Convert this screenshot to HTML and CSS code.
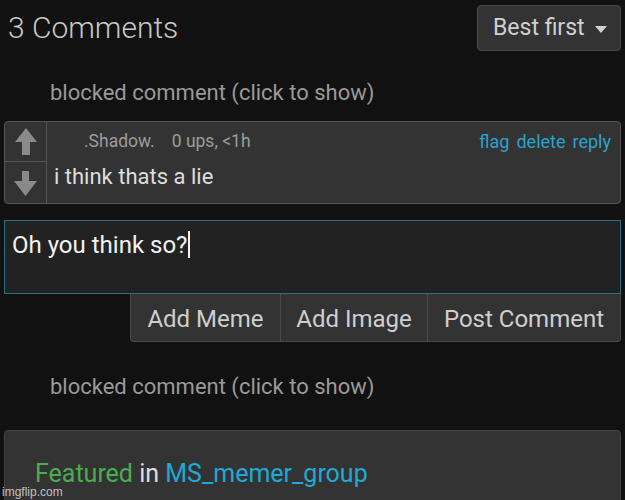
FILE: index.html
```html
<!DOCTYPE html>
<html>
<head>
<meta charset="utf-8">
<link rel="stylesheet" href="styles.css">
</head>
<body>
<div class="page">
  <div class="header">
    <h2 class="title">3 Comments</h2>
    <div class="sort">Best first <span class="caret"></span></div>
  </div>
  <div class="blocked first">blocked comment (click to show)</div>
  <div class="comment">
    <div class="votes">
      <div class="vote up">
        <svg width="22" height="27" viewBox="0 0 22 27"><polygon points="11,0 22,14 15,14 15,27 7,27 7,14 0,14" fill="#8a8a8a"/></svg>
      </div>
      <div class="vote down">
        <svg width="23" height="25" viewBox="0 0 23 25"><polygon points="8,0 15,0 15,10 23,10 11.5,25 0,10 8,10" fill="#8a8a8a"/></svg>
      </div>
    </div>
    <div class="cbody">
      <div class="meta">
        <span class="user">.Shadow.</span>
        <span class="ups">0 ups, &lt;1h</span>
        <span class="links"><a>flag</a><a>delete</a><a>reply</a></span>
      </div>
      <div class="ctext">i think thats a lie</div>
    </div>
  </div>
  <div class="reply">
    <div class="input">Oh you think so?<span class="cursor"></span></div>
    <div class="actions">
      <div class="btn">Add Meme</div>
      <div class="btn">Add Image</div>
      <div class="btn">Post Comment</div>
    </div>
  </div>
  <div class="blocked second">blocked comment (click to show)</div>
  <div class="featured">
    <span class="green">Featured</span> in <span class="blue">MS_memer_group</span>
  </div>
</div>
<div class="watermark">imgflip.com</div>
</body>
</html>
```
FILE: styles.css
```css
html, body {
  margin: 0;
  padding: 0;
  background: #111111;
  height: 100%;
  overflow: hidden;
}
body {
  font-family: Roboto, "Liberation Sans", sans-serif;
  color: #cccccc;
  position: relative;
}
.page {
  padding: 5px 4px 0 4px;
}
.header {
  display: flex;
  justify-content: space-between;
  align-items: flex-start;
}
.title {
  margin: 6px 0 0 4px;
  font-weight: 300;
  font-size: 30px;
  line-height: 34px;
  color: #c8c8c8;
}
.sort {
  box-sizing: border-box;
  width: 144px;
  height: 46px;
  background: #333333;
  border: 1px solid #4a4a4a;
  border-radius: 4px;
  font-size: 23px;
  line-height: 44px;
  padding-left: 15px;
  color: #d0d0d0;
  display: flex;
  align-items: center;
  gap: 10px;
}
.caret {
  width: 0;
  height: 0;
  border-left: 6.5px solid transparent;
  border-right: 6.5px solid transparent;
  border-top: 7px solid #d0d0d0;
  margin-top: 2px;
}
.blocked {
  font-size: 22px;
  line-height: 26px;
  color: #9a9a9a;
  padding-left: 46px;
}
.blocked.first {
  margin-top: 29px;
}
.blocked.second {
  margin-top: 32px;
}
.comment {
  margin-top: 15px;
  display: flex;
  height: 83px;
  box-sizing: border-box;
  background: #333333;
  border: 1px solid #555555;
  border-radius: 4px;
}
.votes {
  width: 41px;
  border-right: 1px solid #555555;
  display: flex;
  flex-direction: column;
}
.vote {
  flex: 1;
  display: flex;
  justify-content: center;
  align-items: center;
}
.vote.up {
  border-bottom: 1px solid #555555;
  padding-left: 1px;
}
.vote.down {
  padding-top: 2px;
}
.cbody {
  flex: 1;
  padding: 0 9px 0 7px;
}
.meta {
  display: flex;
  align-items: center;
  height: 38px;
  font-size: 17.5px;
  color: #9c9c9c;
}
.user {
  margin-left: 30px;
}
.ups {
  margin-left: 17px;
}
.links {
  margin-left: auto;
  display: flex;
  gap: 7px;
  color: #2aa3cc;
  font-size: 18px;
}
.ctext {
  font-size: 22px;
  line-height: 26px;
  color: #dedede;
  margin-top: 4px;
}
.reply {
  margin-top: 16px;
}
.input {
  box-sizing: border-box;
  height: 74px;
  background: #222222;
  border: 1px solid #2b6f86;
  font-size: 24px;
  line-height: 28px;
  color: #f2f2f2;
  padding: 10px 7px 0;
  display: flex;
  align-items: flex-start;
}
.cursor {
  display: inline-block;
  width: 2px;
  height: 27px;
  background: #f2f2f2;
  margin-left: 1px;
}
.actions {
  display: flex;
  justify-content: flex-end;
}
.btn {
  box-sizing: border-box;
  height: 48px;
  background: #333333;
  border: 1px solid #4a4a4a;
  border-top: none;
  font-size: 24px;
  line-height: 50px;
  color: #cfcfcf;
  text-align: center;
}
.btn:nth-child(1) {
  width: 150px;
  border-bottom-left-radius: 4px;
  border-right: none;
}
.btn:nth-child(2) {
  width: 147px;
  border-right: none;
}
.btn:nth-child(3) {
  width: 194px;
  border-bottom-right-radius: 4px;
}
.featured {
  margin-top: 30px;
  box-sizing: border-box;
  height: 100px;
  background: #333333;
  border: 1px solid #444444;
  border-radius: 4px;
  padding: 28px 0 0 30px;
  font-size: 25px;
  color: #dddddd;
}
.green {
  color: #4cad4f;
}
.blue {
  color: #1fa9d6;
}
.watermark {
  position: absolute;
  left: 2px;
  top: 485px;
  font-size: 12px;
  font-family: "Liberation Sans", sans-serif;
  color: rgba(230, 230, 230, 0.8);
}
```
